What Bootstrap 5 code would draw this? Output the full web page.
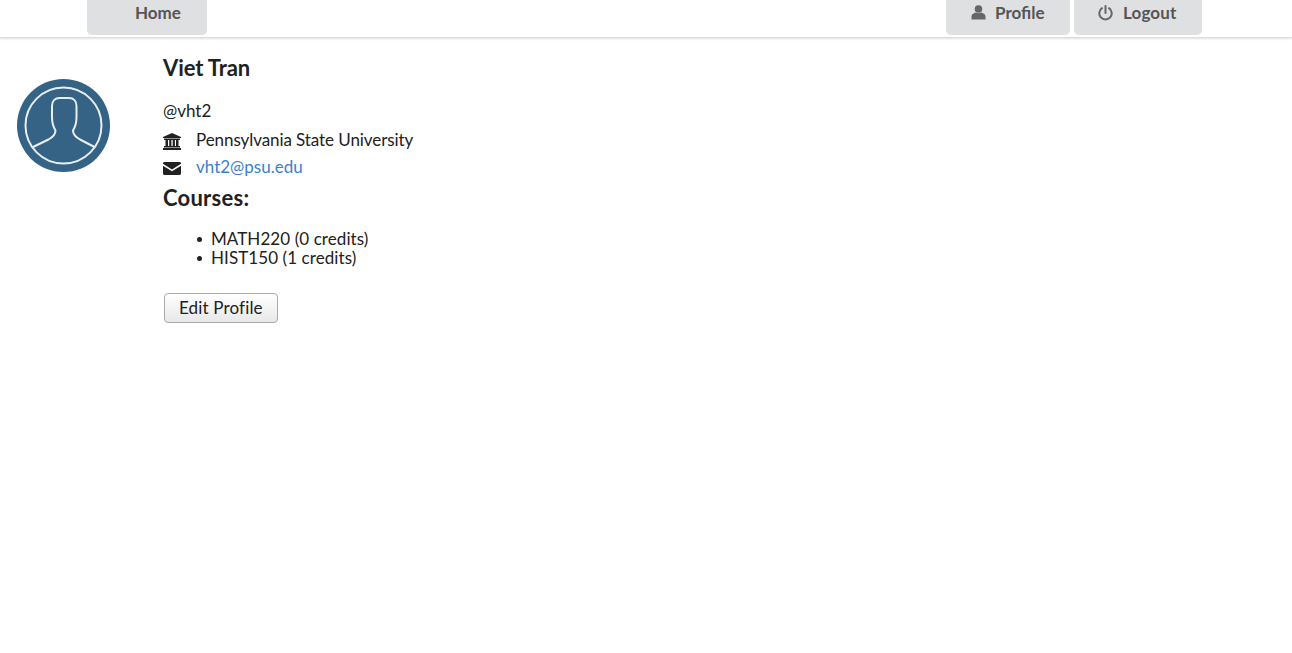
<!doctype html>
<html lang="en">
<head>
<meta charset="utf-8">
<title>Profile</title>
<link href="https://cdn.jsdelivr.net/npm/bootstrap@5.3.0/dist/css/bootstrap.min.css" rel="stylesheet">
<style>
body{font-family:Lato,"Liberation Sans",sans-serif;font-size:17px;color:#212121;background:#fff;line-height:19px}
.topbar{height:38px;border-bottom:1px solid #ddd;box-shadow:0 1px 2px rgba(0,0,0,.12);padding:0 90px 0 87px}
.tab-btn{height:35px;background:#dfe0e2;border-radius:0 0 5px 5px;color:#555;font-weight:700;font-size:17px;display:flex;align-items:center;text-decoration:none;padding-bottom:10px}
.tab-home{width:120px;padding-left:48px}
.tab-profile{width:124px;padding-left:25px}
.tab-logout{width:128px;padding-left:24px;letter-spacing:.15px}
.tab-btn svg{margin-right:9px;flex:none}
.tab-logout svg{margin-right:10px}
.side-col{width:163px;padding:41px 0 0 17px;flex:none}
.main-col{padding-top:17px}
.name-h{font-size:22px;font-weight:700;line-height:26px;margin:0 0 20px;letter-spacing:-.1px}
.courses-h{font-size:22px;font-weight:700;line-height:26px;margin:1px 0 18px;letter-spacing:.25px}
.handle{height:19px;margin-bottom:10px}
.info-line{height:27px;display:flex;align-items:flex-start}
.info-ico{width:33px;flex:none;padding-top:3px}
.ico-mail{padding-top:5px}
.info-ico svg{display:block}
.uni-name{letter-spacing:-.08px}
a.mail-link{color:#3c7fd0;text-decoration:none}
.course-list{margin:0 0 26px;padding-left:48px;letter-spacing:.08px;list-style:none}
.course-list li{position:relative}
.course-list li::before{content:"";position:absolute;left:-14px;top:8px;width:5px;height:5px;border-radius:50%;background:#212121}
.edit-btn{font-size:17px;line-height:20px;color:#212121;padding:4px 14px;border:1px solid #aaa;border-radius:4px;background:linear-gradient(#fff,#e8e8e8);margin-left:1px;letter-spacing:.15px}
</style>
</head>
<body>
<nav class="topbar d-flex justify-content-between">
  <a class="tab-btn tab-home" href="#">Home</a>
  <div class="d-flex gap-1">
    <a class="tab-btn tab-profile" href="#"><svg width="15" height="15" viewBox="0 0 15 15"><circle cx="7.500" cy="4" r="3.800" fill="#666"/><path d="M0.500 14.500V11.500C0.500 9 3 8.200 5 7.500C6.500 8.600 8.500 8.600 10 7.500C12 8.200 14.500 9 14.500 11.500V14.500Z" fill="#666"/></svg>Profile</a>
    <a class="tab-btn tab-logout" href="#"><svg width="15" height="16" viewBox="0 0 15 16" fill="none" stroke="#666" stroke-width="2" stroke-linecap="round"><path d="M7.500 1V8"/><path d="M4 3.200A6.200 6.200 0 1 0 11 3.200"/></svg>Logout</a>
  </div>
</nav>
<div class="d-flex">
  <div class="side-col">
    <svg width="93" height="93" viewBox="0 0 93 93" role="img" aria-label="Avatar">
      <circle cx="46.500" cy="46.500" r="46.500" fill="#356386"/>
      <circle cx="46.500" cy="46.500" r="38" fill="none" stroke="#e8eef2" stroke-width="2"/>
      <path d="M16 68L31.500 60.500C36 58 38.500 56 38.500 51.500C36 47.500 35 44 35 38V27C35 22 38 19 42.500 19H52C56.500 19 59.500 22 59.500 27V38C59.500 44 58.500 47.500 56 51.500C56 56 58.500 58 63 60.500L77.500 68" fill="none" stroke="#e8eef2" stroke-width="2"/>
    </svg>
  </div>
  <div class="main-col">
    <h1 class="name-h">Viet Tran</h1>
    <div class="handle">@vht2</div>
    <div class="info-line">
      <span class="info-ico"><svg width="18" height="17" viewBox="0 0 18 17" fill="#212121"><path d="M9 0L18 4V5H0V4Z"/><rect x="1" y="5.500" width="16" height="1.500"/><rect x="2.500" y="7" width="2.500" height="6"/><rect x="6.200" y="7" width="2.200" height="6"/><rect x="9.700" y="7" width="2.200" height="6"/><rect x="13" y="7" width="2.500" height="6"/><rect x="1" y="13" width="16" height="1.500"/><rect x="0" y="15" width="18" height="2"/></svg></span>
      <span class="uni-name">Pennsylvania State University</span>
    </div>
    <div class="info-line">
      <span class="info-ico ico-mail"><svg width="18" height="13" viewBox="0 0 18 14" preserveAspectRatio="none" fill="#212121"><path d="M1.500 0H16.500C17.300 0 18 .7 18 1.500V2L9 8L0 2V1.500C0 .7.700 0 1.500 0Z"/><path d="M0 4L9 10L18 4V12.500C18 13.300 17.300 14 16.500 14H1.500C.7 14 0 13.300 0 12.500Z"/></svg></span>
      <a class="mail-link" href="#">vht2@psu.edu</a>
    </div>
    <h2 class="courses-h">Courses:</h2>
    <ul class="course-list">
      <li>MATH220 (0 credits)</li>
      <li>HIST150 (1 credits)</li>
    </ul>
    <button class="btn edit-btn" type="button">Edit Profile</button>
  </div>
</div>
<script src="https://cdn.jsdelivr.net/npm/bootstrap@5.3.0/dist/js/bootstrap.bundle.min.js"></script>
</body>
</html>
